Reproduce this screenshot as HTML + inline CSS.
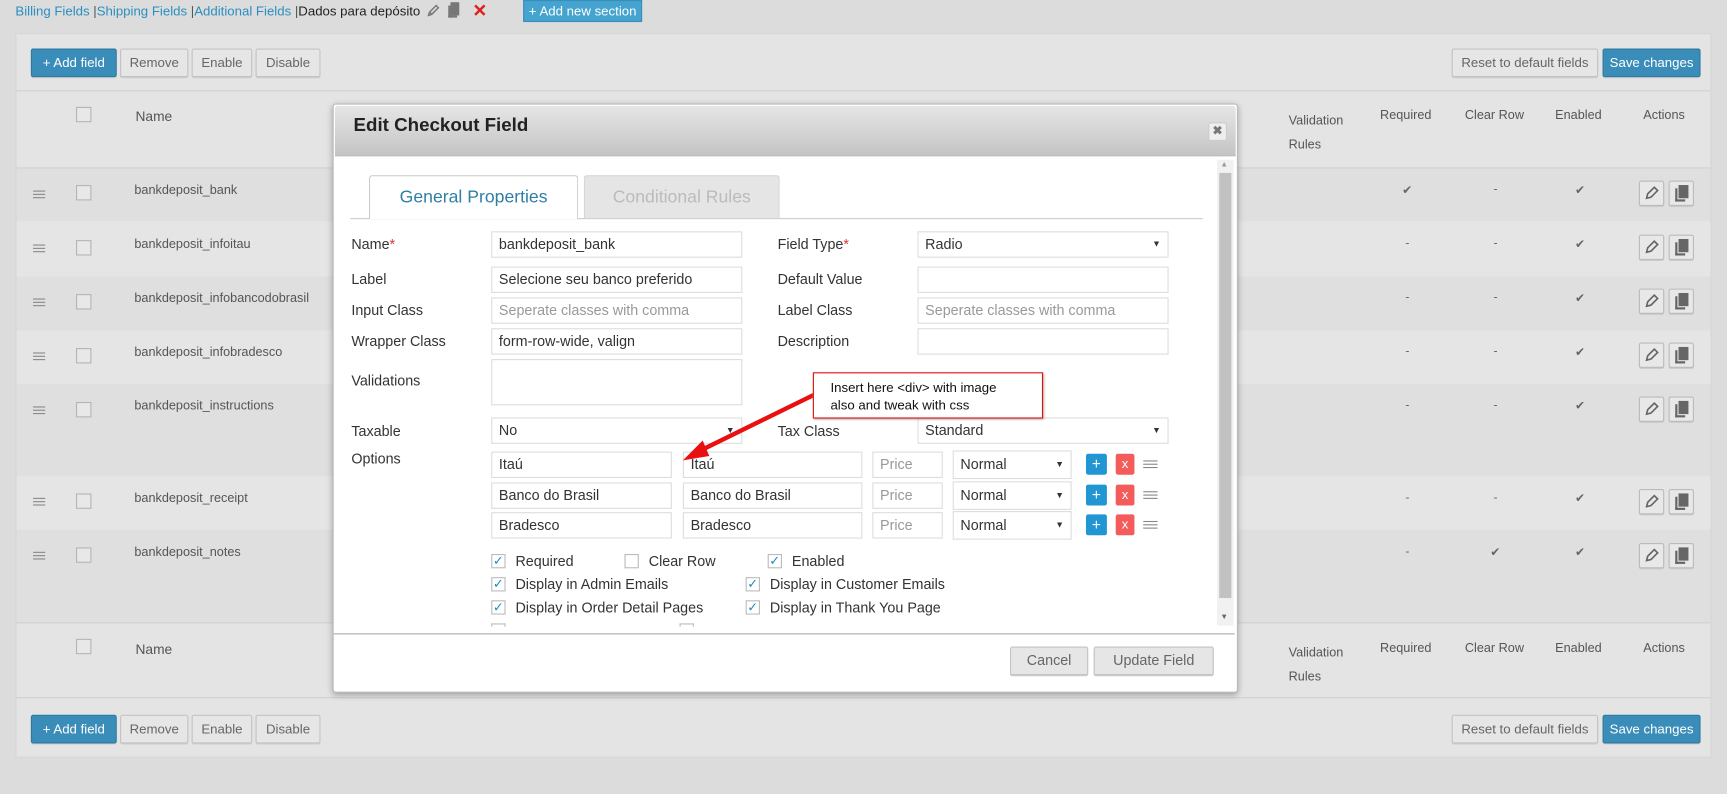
<!DOCTYPE html>
<html><head><meta charset="utf-8">
<style>
*{box-sizing:border-box;margin:0;padding:0}
html,body{width:1727px;height:794px;overflow:hidden;background:#dcdcdc}
#w{position:absolute;left:0;top:0;width:1568px;height:721px;transform:scale(1.10140);transform-origin:0 0;font-family:"Liberation Sans",Arial,sans-serif;font-size:11.5px;color:#555}
.a{position:absolute}
.lnk{color:#2a8fc0}
.btn{position:absolute;height:26px;border:1px solid #c4c4c4;border-radius:2px;background:#e6e6e6;color:#666;font-size:12px;text-align:center;line-height:24px;box-shadow:0 1px 0 #ccc}
.bb{background:#3a8db8;border-color:#2f7aa0;color:#fff}
.cb{position:absolute;width:14px;height:14px;border:1px solid #b4b4b4;background:#e8e8e8}
.row{position:absolute;left:15px;width:1538px}
.ham{position:absolute;left:30px;width:11px;height:7px;border-top:1px solid #888;border-bottom:1px solid #888}
.ham:after{content:"";position:absolute;left:0;right:0;top:2px;border-top:1px solid #888}
.ab{position:absolute;width:23px;height:23px;border:1px solid #bbb;border-radius:2px;background:#e8e8e8;box-shadow:0 1px 0 #ccc}
.chk{position:absolute;font-size:11px;color:#666}
.lbl{position:absolute;left:319px;color:#333;font-size:13px}
.in{position:absolute;height:24px;border:1px solid #ddd;background:#fff;font-size:13px;color:#333;padding-left:6px;line-height:22px;white-space:nowrap;overflow:hidden}
.ph{color:#999}
.sel:after{content:"▼";position:absolute;right:6px;top:0;font-size:8px;color:#333}
.mcb{position:absolute;width:13px;height:13px;border:1px solid #bbb;background:#fff;font-size:12px;line-height:11px;color:#1e8cbe;text-align:center}
.ml{position:absolute;font-size:13px;color:#333}
</style></head><body><div id="w">
<div class="a" style="left:14px;top:3px;font-size:12px"><span class="lnk">Billing Fields</span> |<span class="lnk">Shipping Fields</span> |<span class="lnk">Additional Fields</span> |<span style="color:#222">Dados para depósito</span></div>
<svg class="a" style="left:386px;top:3px" width="14" height="14" viewBox="0 0 14 14"><path d="M3 11l1-3 6-6 2 2-6 6z M4 8l2 2" fill="none" stroke="#777" stroke-width="1.3"/></svg>
<div class="a" style="left:409px;top:2px;width:8px;height:12px;background:#777"></div><div class="a" style="left:407px;top:5px;width:2px;height:11px;background:#777"></div><div class="a" style="left:407px;top:14px;width:8px;height:2px;background:#777"></div>
<div class="a" style="left:429px;top:0;color:#e02020;font-size:16px;font-weight:bold">✕</div>
<div class="a" style="left:475px;top:0;width:108px;height:20px;background:#44a3cf;border:1px solid #3a8db8;color:#fff;font-size:12px;line-height:18px;text-align:center">+ Add new section</div>

<div class="a" style="left:14px;top:30px;width:1540px;height:658px;background:#e4e4e4;border:1px solid #d6d6d6"></div>
<div class="btn bb" style="left:28px;top:44px;width:78px">+ Add field</div>
<div class="btn" style="left:109px;top:44px;width:62px">Remove</div>
<div class="btn" style="left:174px;top:44px;width:55px">Enable</div>
<div class="btn" style="left:232px;top:44px;width:59px">Disable</div>
<div class="btn" style="left:1318px;top:44px;width:133px">Reset to default fields</div>
<div class="btn bb" style="left:1455px;top:44px;width:89px">Save changes</div>
<div class="a" style="left:15px;top:82px;width:1538px;border-top:1px solid #d0d0d0"></div>
<div class="cb" style="left:69px;top:97px"></div>
<div class="a" style="left:123px;top:99px;font-size:12.5px">Name</div>
<div class="a" style="left:1170px;top:99px;line-height:22px">Validation<br>Rules</div>
<div class="a" style="left:1253px;top:99px">Required</div><div class="a" style="left:1330px;top:99px">Clear Row</div><div class="a" style="left:1412px;top:99px">Enabled</div><div class="a" style="left:1492px;top:99px">Actions</div>
<div class="a" style="left:15px;top:152px;width:1538px;border-top:1px solid #d0d0d0"></div>

<div class="row" style="top:153px;height:48px;background:#dfdfdf"></div>
<div class="row" style="top:201px;height:50px;background:#e5e5e5"></div>
<div class="row" style="top:251px;height:49px;background:#dfdfdf"></div>
<div class="row" style="top:300px;height:49px;background:#e5e5e5"></div>
<div class="row" style="top:349px;height:83px;background:#dfdfdf"></div>
<div class="row" style="top:432px;height:49px;background:#e5e5e5"></div>
<div class="row" style="top:481px;height:84px;background:#dfdfdf"></div>

<div class="ham" style="top:173px"></div><div class="cb" style="left:69px;top:168px"></div><div class="a" style="left:122px;top:167px">bankdeposit_bank</div>
<div class="ham" style="top:222px"></div><div class="cb" style="left:69px;top:218px"></div><div class="a" style="left:122px;top:216px">bankdeposit_infoitau</div>
<div class="ham" style="top:271px"></div><div class="cb" style="left:69px;top:267px"></div><div class="a" style="left:122px;top:265px">bankdeposit_infobancodobrasil</div>
<div class="ham" style="top:320px"></div><div class="cb" style="left:69px;top:316px"></div><div class="a" style="left:122px;top:314px">bankdeposit_infobradesco</div>
<div class="ham" style="top:369px"></div><div class="cb" style="left:69px;top:365px"></div><div class="a" style="left:122px;top:363px">bankdeposit_instructions</div>
<div class="ham" style="top:452px"></div><div class="cb" style="left:69px;top:448px"></div><div class="a" style="left:122px;top:447px">bankdeposit_receipt</div>
<div class="ham" style="top:501px"></div><div class="cb" style="left:69px;top:497px"></div><div class="a" style="left:122px;top:496px">bankdeposit_notes</div>

<div class="chk" style="left:1273px;top:166px">✔</div><div class="chk" style="left:1356px;top:166px">-</div><div class="chk" style="left:1430px;top:166px">✔</div>
<div class="chk" style="left:1276px;top:215px">-</div><div class="chk" style="left:1356px;top:215px">-</div><div class="chk" style="left:1430px;top:215px">✔</div>
<div class="chk" style="left:1276px;top:264px">-</div><div class="chk" style="left:1356px;top:264px">-</div><div class="chk" style="left:1430px;top:264px">✔</div>
<div class="chk" style="left:1276px;top:313px">-</div><div class="chk" style="left:1356px;top:313px">-</div><div class="chk" style="left:1430px;top:313px">✔</div>
<div class="chk" style="left:1276px;top:362px">-</div><div class="chk" style="left:1356px;top:362px">-</div><div class="chk" style="left:1430px;top:362px">✔</div>
<div class="chk" style="left:1276px;top:446px">-</div><div class="chk" style="left:1356px;top:446px">-</div><div class="chk" style="left:1430px;top:446px">✔</div>
<div class="chk" style="left:1276px;top:495px">-</div><div class="chk" style="left:1353px;top:495px">✔</div><div class="chk" style="left:1430px;top:495px">✔</div>

<div id="acts"></div>
<div class="a" style="left:15px;top:565px;width:1538px;border-top:1px solid #d0d0d0"></div>
<div class="cb" style="left:69px;top:580px"></div>
<div class="a" style="left:123px;top:583px;font-size:12.5px">Name</div>
<div class="a" style="left:1170px;top:582px;line-height:22px">Validation<br>Rules</div>
<div class="a" style="left:1253px;top:583px">Required</div><div class="a" style="left:1330px;top:583px">Clear Row</div><div class="a" style="left:1412px;top:583px">Enabled</div><div class="a" style="left:1492px;top:583px">Actions</div>
<div class="a" style="left:15px;top:633px;width:1538px;border-top:1px solid #d0d0d0"></div>
<div class="btn bb" style="left:28px;top:649px;width:78px">+ Add field</div>
<div class="btn" style="left:109px;top:649px;width:62px">Remove</div>
<div class="btn" style="left:174px;top:649px;width:55px">Enable</div>
<div class="btn" style="left:232px;top:649px;width:59px">Disable</div>
<div class="btn" style="left:1318px;top:649px;width:133px">Reset to default fields</div>
<div class="btn bb" style="left:1455px;top:649px;width:89px">Save changes</div>

<div class="a" style="left:302px;top:94px;width:822px;height:535px;background:#fff;border:1px solid #bbb;border-radius:3px;box-shadow:0 2px 6px rgba(0,0,0,.3)"></div>
<div class="a" style="left:304px;top:96px;width:818px;height:46px;background:linear-gradient(#e6e6e6,#c4c4c4);border-bottom:1px solid #aaa;border-radius:3px 3px 0 0"></div>
<div class="a" style="left:321px;top:104px;font-size:17px;font-weight:bold;color:#222">Edit Checkout Field</div>
<div class="a" style="left:1097px;top:111px;width:17px;height:17px;background:#eee;border:1px solid #ccc;border-radius:2px;font-size:11px;color:#777;text-align:center;line-height:15px;font-weight:bold">✖</div>
<div class="a" style="left:1105px;top:145px;width:15px;height:423px;background:#f1f1f1"></div>
<div class="a" style="left:1107px;top:157px;width:11px;height:386px;background:#c1c1c1"></div>
<div class="a" style="left:1108px;top:146px;font-size:7px;color:#999">▲</div>
<div class="a" style="left:1108px;top:557px;font-size:7px;color:#666">▼</div>

<div class="a" style="left:318px;top:198px;width:774px;border-top:1px solid #ccc"></div>
<div class="a" style="left:335px;top:159px;width:190px;height:40px;background:#fff;border:1px solid #ccc;border-bottom:none;border-radius:3px 3px 0 0;color:#2e7fa5;font-size:16px;text-align:center;line-height:40px">General Properties</div>
<div class="a" style="left:530px;top:159px;width:178px;height:39px;background:#e5e5e5;border:1px solid #d4d4d4;border-bottom:none;border-radius:3px 3px 0 0;color:#bbb;font-size:16px;text-align:center;line-height:40px">Conditional Rules</div>

<div class="lbl" style="top:214px">Name<span style="color:#d33">*</span></div>
<div class="in" style="left:446px;top:210px;width:228px">bankdeposit_bank</div>
<div class="ml" style="left:706px;top:214px">Field Type<span style="color:#d33">*</span></div>
<div class="in sel" style="left:833px;top:210px;width:228px">Radio</div>
<div class="lbl" style="top:246px">Label</div>
<div class="in" style="left:446px;top:242px;width:228px">Selecione seu banco preferido</div>
<div class="ml" style="left:706px;top:246px">Default Value</div>
<div class="in" style="left:833px;top:242px;width:228px"></div>
<div class="lbl" style="top:274px">Input Class</div>
<div class="in ph" style="left:446px;top:270px;width:228px">Seperate classes with comma</div>
<div class="ml" style="left:706px;top:274px">Label Class</div>
<div class="in ph" style="left:833px;top:270px;width:228px">Seperate classes with comma</div>
<div class="lbl" style="top:302px">Wrapper Class</div>
<div class="in" style="left:446px;top:298px;width:228px">form-row-wide, valign</div>
<div class="ml" style="left:706px;top:302px">Description</div>
<div class="in" style="left:833px;top:298px;width:228px"></div>
<div class="lbl" style="top:338px">Validations</div>
<div class="in" style="left:446px;top:326px;width:228px;height:42px"></div>
<div class="lbl" style="top:384px">Taxable</div>
<div class="in sel" style="left:446px;top:379px;width:228px">No</div>
<div class="ml" style="left:706px;top:384px">Tax Class</div>
<div class="in sel" style="left:833px;top:379px;width:228px">Standard</div>
<div class="lbl" style="top:409px">Options</div>

<div id="opts"></div>
<div id="cbs"></div>
<div class="a" style="left:303px;top:575px;width:818px;border-top:1px solid #aaa"></div>
<div class="btn" style="left:917px;top:587px;width:71px;font-size:13px">Cancel</div>
<div class="btn" style="left:993px;top:587px;width:109px;font-size:13px">Update Field</div>

<svg class="a" style="left:600px;top:340px" width="160" height="90"><path d="M140 18 L30 72" stroke="#e81010" stroke-width="4"/><path d="M20 78 L38 60 L44 74 Z" fill="#e81010"/></svg>
<div class="a" style="left:738px;top:338px;width:209px;height:42px;background:#fff;border:1px solid #e01010;box-shadow:1px 1px 2px #999;font-size:12px;color:#111;padding:5px 0 0 15px;line-height:16px">Insert here &lt;div&gt; with image<br>also and tweak with css</div>
</div>
<script>
var a='',ys=[164,213,262,311,360,444,493];
ys.forEach(function(y){a+='<div class="ab" style="left:1488px;top:'+y+'px"><svg width="21" height="21" viewBox="0 0 21 21"><path d="M6 15l1-4 6-6 3 3-6 6z" fill="none" stroke="#666" stroke-width="1.5"/></svg></div><div class="ab" style="left:1515px;top:'+y+'px"><div class="a" style="left:8px;top:3px;width:9px;height:12px;background:#666"></div><div class="a" style="left:5px;top:6px;width:2px;height:12px;background:#666"></div><div class="a" style="left:5px;top:16px;width:9px;height:2px;background:#666"></div></div>';});
document.getElementById('acts').outerHTML=a;
var o='',rows=[['Itaú','Itaú',410],['Banco do Brasil','Banco do Brasil',438],['Bradesco','Bradesco',465]];
rows.forEach(function(r){var y=r[2];o+='<div class="in" style="left:446px;top:'+y+'px;width:164px">'+r[0]+'</div><div class="in" style="left:620px;top:'+y+'px;width:163px">'+r[1]+'</div><div class="in ph" style="left:792px;top:'+y+'px;width:64px">Price</div><div class="in sel" style="left:865px;top:'+(y-1)+'px;width:108px;height:26px;line-height:24px">Normal</div><div class="a" style="left:986px;top:'+(y+2)+'px;width:19px;height:19px;background:#2196d3;border-radius:2px;color:#fff;text-align:center;line-height:19px;font-size:14px">+</div><div class="a" style="left:1013px;top:'+(y+2)+'px;width:17px;height:19px;background:#f45b5b;border-radius:2px;color:#fff;text-align:center;line-height:18px;font-size:12px">x</div><div class="ham" style="left:1038px;top:'+(y+8)+'px;width:13px"></div>';});
document.getElementById('opts').outerHTML=o;
var c='',L=[[446,503,1,'Required'],[567,503,0,'Clear Row'],[697,503,1,'Enabled'],[446,524,1,'Display in Admin Emails'],[677,524,1,'Display in Customer Emails'],[446,545,1,'Display in Order Detail Pages'],[677,545,1,'Display in Thank You Page']];
L.forEach(function(q){c+='<div class="mcb" style="left:'+q[0]+'px;top:'+q[1]+'px">'+(q[2]?'✓':'')+'</div><div class="ml" style="left:'+(q[0]+22)+'px;top:'+(q[1]-1)+'px">'+q[3]+'</div>';});
c+='<div class="mcb" style="left:446px;top:566px;height:3px;border-bottom:none"></div><div class="mcb" style="left:617px;top:566px;height:3px;border-bottom:none"></div>';
document.getElementById('cbs').outerHTML=c;
</script>
</body></html>
